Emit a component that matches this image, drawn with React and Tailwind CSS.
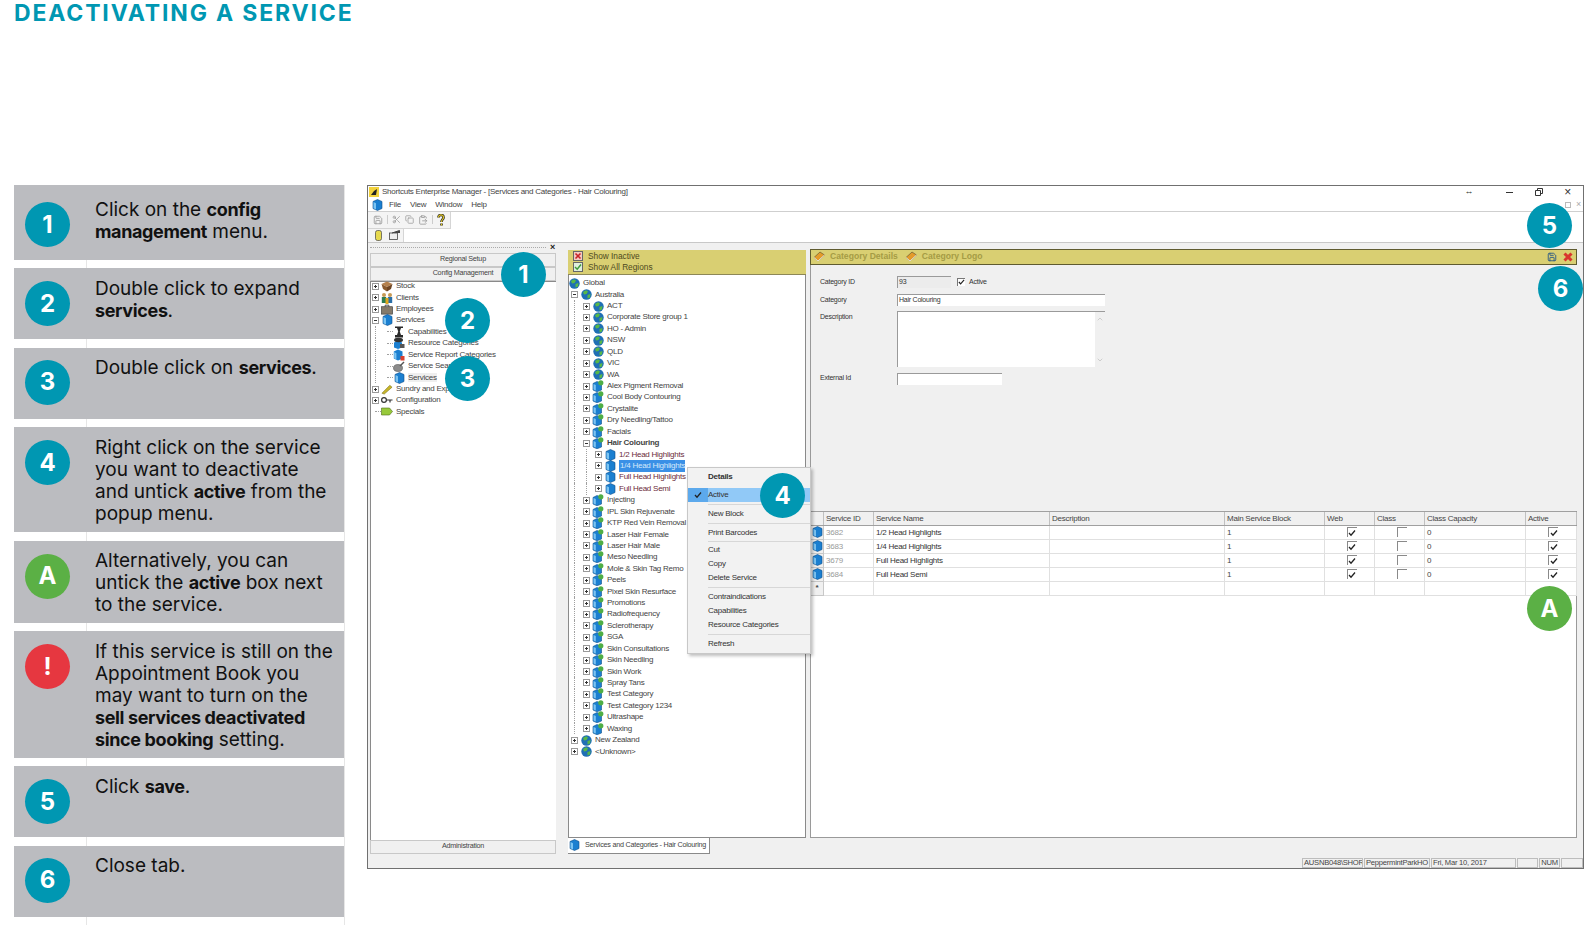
import { Save, Scissors, Copy, ClipboardPaste, ChevronUp, ChevronDown } from "lucide-react";

function B({ children }) {
  return <b className="text-[18px] tracking-[-0.02em]">{children}</b>;
}

const steps = [
  { badge: "1", color: "bg-[#0097b2]", h: "h-[75.5px]", pad: "pt-[17.5px]", textPad: "pt-[14px]", body: <>Click on the <B>config</B><br /><B>management</B> menu.</> },
  { badge: "2", color: "bg-[#0097b2]", h: "h-[71px]", pad: "pt-[13px]", textPad: "pt-[9.5px]", body: <>Double click to expand<br /><B>services</B>.</> },
  { badge: "3", color: "bg-[#0097b2]", h: "h-[71px]", pad: "pt-[12px]", textPad: "pt-[9.5px]", body: <>Double click on <B>services</B>.</> },
  { badge: "4", color: "bg-[#0097b2]", h: "h-[105px]", pad: "pt-[13px]", textPad: "pt-[9.5px]", body: <>Right click on the service<br />you want to deactivate<br />and untick <B>active</B> from the<br />popup menu.</> },
  { badge: "A", color: "bg-[#5bb045]", h: "h-[82.5px]", pad: "pt-[13px]", textPad: "pt-[9.5px]", body: <>Alternatively, you can<br />untick the <B>active</B> box next<br />to the service.</> },
  { badge: "!", color: "bg-[#e63740]", h: "h-[126.5px]", pad: "pt-[13px]", textPad: "pt-[9.5px]", body: <>If this service is still on the<br />Appointment Book you<br />may want to turn on the<br /><B>sell services deactivated</B><br /><B>since booking</B> setting.</> },
  { badge: "5", color: "bg-[#0097b2]", h: "h-[71px]", pad: "pt-[13px]", textPad: "pt-[9.5px]", body: <>Click <B>save</B>.</> },
  { badge: "6", color: "bg-[#0097b2]", h: "h-[71px]", pad: "pt-[12px]", textPad: "pt-[9.5px]", body: <>Close tab.</> },
];

const regions = ["ACT", "Corporate Store group 1", "HO - Admin", "NSW", "QLD", "VIC", "WA"];
const categoriesA = ["Alex Pigment Removal", "Cool Body Contouring", "Crystalite", "Dry Needling/Tattoo", "Facials"];
const categoriesB = ["Injecting", "IPL Skin Rejuvenate", "KTP Red Vein Removal", "Laser Hair Female", "Laser Hair Male", "Meso Needling", "Mole & Skin Tag Remo", "Peels", "Pixel Skin Resurface", "Promotions", "Radiofrequency", "Sclerotherapy", "SGA", "Skin Consultations", "Skin Needling", "Skin Work", "Spray Tans", "Test Category", "Test Category 1234", "Ultrashape", "Waxing"];

const services = [
  { id: "3682", name: "1/2 Head Highlights" },
  { id: "3683", name: "1/4 Head Highlights" },
  { id: "3679", name: "Full Head Highlights" },
  { id: "3684", name: "Full Head Semi" },
];

const gridCols = "grid grid-cols-[13px_50px_176px_175px_100px_50px_50px_101px_51px]";

function Globe() {
  return (
    <svg width="11" height="11" viewBox="0 0 11 11">
      <circle cx="5.5" cy="5.5" r="5.2" fill="#1f6fb5" />
      <path d="M2 3 L5 1.2 L7 2.5 L5.5 5 L3 5.5 Z M6.5 6 L9.5 5 L9 8.5 L6.5 9.5 Z" fill="#58b848" />
    </svg>
  );
}

function Cube() {
  return (
    <svg width="11" height="12" viewBox="0 0 11 12">
      <path d="M5.5 0.5 L10 2.5 V9.5 L5.5 11.5 L1 9.5 V2.5 Z" fill="#1b7fd0" stroke="#0e4f8a" strokeWidth="0.6" />
      <path d="M1.5 3 L4 4.2 V10.4 L1.5 9.2 Z" fill="#7cc4f2" />
    </svg>
  );
}

function GreenCube() {
  return (
    <svg width="12" height="12" viewBox="0 0 12 12">
      <path d="M5 1.5 L9.5 3.5 V10 L5 11.8 L1 10 V3.5 Z" fill="#1b7fd0" stroke="#0e4f8a" strokeWidth="0.6" />
      <path d="M1.5 4 L3.8 5 V10.6 L1.5 9.6 Z" fill="#7cc4f2" />
      <circle cx="8.8" cy="2.8" r="2.6" fill="#4fae45" />
    </svg>
  );
}

function LeftIcon({ kind }) {
  if (kind === "stock") return <svg width="12" height="11" viewBox="0 0 12 11"><path d="M6 0.5 L11.5 3 L6 6 L0.5 3 Z" fill="#b5814d" /><path d="M0.5 3 L6 6 V10.5 L2 8 Z" fill="#8a5a2d" /><path d="M11.5 3 L6 6 V10.5 L10 8 Z" fill="#6f4522" /></svg>;
  if (kind === "clients") return <svg width="12" height="12" viewBox="0 0 12 12"><circle cx="3" cy="3" r="2" fill="#c79a55" /><circle cx="9" cy="3" r="2" fill="#c79a55" /><rect x="0.8" y="5" width="4.4" height="6" fill="#2c7c52" /><rect x="6.8" y="5" width="4.4" height="6" fill="#2a6fa8" /><rect x="4.5" y="6" width="3" height="6" fill="#e0a81e" /></svg>;
  if (kind === "employees") return <svg width="13" height="11" viewBox="0 0 13 11"><path d="M4.5 2.5 V0.8 H8.5 V2.5" fill="none" stroke="#444" /><rect x="0.5" y="2.5" width="12" height="8" fill="#857a6a" stroke="#3a3a3a" strokeWidth="0.7" /></svg>;
  if (kind === "services") return <Cube />;
  if (kind === "capabilities") return <svg width="10" height="12" viewBox="0 0 10 12"><path d="M1 0.5 H9 V2 H7 L5.8 5.5 L7 9 H9 V11.5 H1 V9 H3 L4.2 5.5 L3 2 H1 Z" fill="#2a2a2a" /></svg>;
  if (kind === "resource") return <svg width="12" height="12" viewBox="0 0 12 12"><path d="M5 4 L9 5.5 V10.5 L5 12 L1 10.5 V5.5 Z" fill="#1b7fd0" /><ellipse cx="5.5" cy="3" rx="4.5" ry="2.2" fill="#333" /><rect x="7" y="7" width="4.5" height="4" fill="#555" /></svg>;
  if (kind === "report") return <svg width="12" height="12" viewBox="0 0 12 12"><path d="M5 0.5 L9.5 2.5 V9.5 L5 11.5 L0.8 9.5 V2.5 Z" fill="#1b7fd0" /><path d="M1.2 3 L3.4 4.2 V10.2 L1.2 9.2 Z" fill="#7cc4f2" /><rect x="7.5" y="7" width="4" height="4.5" fill="#d9412f" /></svg>;
  if (kind === "search") return <svg width="12" height="11" viewBox="0 0 12 11"><ellipse cx="5" cy="7" rx="4.5" ry="3.5" fill="#8b8b8b" stroke="#555" strokeWidth="0.6" /><path d="M7 5 L11 1" stroke="#555" strokeWidth="1.4" /></svg>;
  if (kind === "sundry") return <svg width="13" height="11" viewBox="0 0 13 11"><path d="M1 9.5 L9.5 1 L12 3 L3.5 10.5 Z" fill="#c7b62b" stroke="#7a6f14" strokeWidth="0.6" /></svg>;
  if (kind === "config") return <svg width="12" height="8" viewBox="0 0 12 8"><circle cx="3" cy="4" r="2.4" fill="none" stroke="#333" strokeWidth="1.2" /><path d="M5.4 4 H11.5 M9 4 V6.5" stroke="#333" strokeWidth="1.2" /></svg>;
  return <svg width="12" height="9" viewBox="0 0 12 9"><path d="M0.5 1 H8.5 L11.5 4.5 L8.5 8 H0.5 Z" fill="#97c93a" stroke="#4f6d17" strokeWidth="0.6" /></svg>;
}

function Expander({ open }) {
  return (
    <span className="relative flex h-[7px] w-[7px] items-center justify-center border border-[#9a9a9a] bg-white">
      <span className="h-px w-[3px] bg-[#333]" />
      {!open && <span className="absolute h-[3px] w-px bg-[#333]" />}
    </span>
  );
}

function TreeRow({ depth, guides = 0, expander = "plus", icon, children, className = "" }) {
  return (
    <div className="flex h-[11.43px] items-center">
      {Array.from({ length: guides }).map((_, i) => (
        <span key={i} className="ml-[6px] h-full w-[6px] border-l border-dotted border-[#a0a0a0]" />
      ))}
      {depth > 0 && (
        <span className="flex h-full w-[12px] items-center justify-center">
          {expander === "plus" && <Expander />}
          {expander === "minus" && <Expander open />}
          {expander === "line" && <span className="ml-[6px] h-px w-[6px] border-t border-dotted border-[#a0a0a0]" />}
        </span>
      )}
      <span className="flex w-[12px] items-center justify-center">{icon}</span>
      <span className={`ml-[3px] whitespace-nowrap ${className}`}>{children}</span>
    </div>
  );
}

function WinButton({ children, className = "" }) {
  return (
    <div className={`flex items-center justify-center border border-[#c8c8c8] bg-[#f0f0f0] text-[7.2px] text-[#444] ${className}`}>
      {children}
    </div>
  );
}

function Tick() {
  return (
    <svg width="8" height="8" viewBox="0 0 8 8">
      <path d="M1 4 L3 6.2 L7 1.5" fill="none" stroke="#222" strokeWidth="1.3" />
    </svg>
  );
}

function CheckCell({ checked }) {
  return (
    <div className="flex items-center justify-center border-r border-b border-[#e0e0e0] pl-[4px]">
      <span className="flex h-[10px] w-[10px] items-center justify-center border-t border-l border-[#8a8a8a] bg-white">
        {checked && <Tick />}
      </span>
    </div>
  );
}

function Cell({ children, className = "" }) {
  return <div className={`flex items-center overflow-hidden whitespace-nowrap border-r border-b border-[#e0e0e0] pl-[2px] pt-px ${className}`}>{children}</div>;
}

function BookIcon() {
  return (
    <svg width="12" height="11" viewBox="0 0 12 11">
      <path d="M1 6.5 L7 1 L11.5 4 L5 10 Z" fill="#e39b2b" stroke="#6b5a30" strokeWidth="0.7" />
      <path d="M1 6.5 L5 10 L11.5 4" fill="none" stroke="#fff" strokeWidth="0.8" />
    </svg>
  );
}

function MenuItem({ children, active, bold }) {
  return (
    <div className={`flex h-[14px] items-center ${active ? "bg-[#91c9f7]" : ""}`}>
      <span className={`flex h-full w-[20px] items-center justify-center ${active ? "bg-[#5ca9ec]" : ""}`}>
        {active && <Tick />}
      </span>
      <span className={bold ? "font-bold" : ""}>{children}</span>
    </div>
  );
}

function MenuSep({ tight }) {
  return <div className={`ml-[20px] h-px bg-[#d7d7d7] ${tight ? "my-px" : "my-[2px]"}`} />;
}

function Callout({ label, className, color = "bg-[#0097b2]" }) {
  return (
    <div className={`absolute flex h-[45px] w-[45px] items-center justify-center rounded-full text-[24px] font-bold text-white ${color} ${className}`}>
      {label}
    </div>
  );
}

export default function App() {
  return (
    <div className="relative h-[926px] w-[1596px] overflow-hidden bg-white font-['Inter',sans-serif]">
      <div className="h-[184.5px] pl-[14px] pt-px">
        <h1 className="text-[23px] font-bold uppercase leading-[25px] tracking-[0.08em] text-[#0097b2]">Deactivating a service</h1>
      </div>

      <div className="flex items-start pl-[14px]">
        {/* instruction steps */}
        <div className="w-[331px] border-r border-[#e6e6e6]">
          {steps.map((s) => (
            <div key={s.badge}>
              <div className={`flex bg-[#bbbcc0] ${s.h}`}>
                <div className={`ml-[11px] w-[45px] shrink-0 ${s.pad}`}>
                  <div className={`flex h-[45px] w-[45px] items-center justify-center rounded-full text-[24px] font-bold text-white ${s.color}`}>{s.badge}</div>
                </div>
                <div className={`ml-[25px] whitespace-nowrap text-[19px] leading-[22px] text-[#111] ${s.textPad}`}>{s.body}</div>
              </div>
              <div className="ml-[72px] h-[8.4px] border-l border-[#e6e6e6]" />
            </div>
          ))}
        </div>

        {/* application window */}
        <div className="ml-[22px] flex h-[684px] w-[1217px] flex-col border border-[#707070] bg-white font-['Liberation_Sans',sans-serif] text-[8px] tracking-[-0.03em] text-[#444]">
          <div className="flex h-[13px] items-center pl-[1px]">
            <svg width="10" height="10" viewBox="0 0 10 10" className="mr-[3px]"><rect width="10" height="10" fill="#f2d23c" /><path d="M2 8 L5 4 L8 2 L7 8 Z" fill="#222" /></svg>
            <span>Shortcuts Enterprise Manager - [Services and Categories - Hair Colouring]</span>
            <div className="ml-auto flex items-center pr-[12px] text-[#333]">
              <span className="mr-[33px] text-[9px]">↔</span>
              <span className="mr-[22px] h-px w-[7px] bg-[#333]" />
              <svg width="8" height="8" viewBox="0 0 8 8" className="mr-[21px]"><path d="M0.5 2.5 H5.5 V7.5 H0.5 Z M2.5 2.5 V0.5 H7.5 V5.5 H5.5" fill="none" stroke="#333" /></svg>
              <span className="text-[12px] leading-none">×</span>
            </div>
          </div>
          <div className="flex h-[13px] items-center border-b border-[#cfcfcf] pl-[4px]">
            <Cube />
            <span className="ml-[6px] mr-[9px]">File</span>
            <span className="mr-[9px]">View</span>
            <span className="mr-[9px]">Window</span>
            <span>Help</span>
            <div className="ml-auto flex items-center gap-[5px] pr-[2px] text-[#aaa]">
              <span className="h-[6px] w-[6px] border border-[#bbb]" />
              <span className="text-[9px] leading-none">×</span>
            </div>
          </div>
          <div className="flex h-[17px] items-center">
            <div className="flex h-full items-center gap-[4px] border-b border-r border-[#d5d5d5] bg-[#f4f4f4] pl-[5px] pr-[5px] text-[#9a9a9a]">
              <Save size={10} />
              <span className="h-[9px] w-px bg-[#ccc]" />
              <Scissors size={9} />
              <Copy size={9} />
              <ClipboardPaste size={10} />
              <span className="h-[9px] w-px bg-[#ccc]" />
              <svg width="8" height="12" viewBox="0 0 8 12"><path d="M1.5 3.5 C1.5 0 6.5 0 6.5 3.5 C6.5 5.5 4.5 5.5 4.5 8 M4.5 9.5 V11.5" fill="none" stroke="#222" strokeWidth="2.6" /><path d="M1.5 3.5 C1.5 0 6.5 0 6.5 3.5 C6.5 5.5 4.5 5.5 4.5 8 M4.5 9.5 V11.5" fill="none" stroke="#e0c62a" strokeWidth="1.2" /></svg>
            </div>
          </div>
          <div className="flex h-[14px] items-center border-b border-[#c8c8c8]">
            <div className="flex h-full items-center gap-[7px] border-r border-[#d5d5d5] bg-[#f4f4f4] pl-[7px] pr-[3px]">
              <svg width="7" height="11" viewBox="0 0 7 11"><rect x="0.5" y="0.5" width="6" height="10" rx="2" fill="#e6d94e" stroke="#444" strokeWidth="0.7" /></svg>
              <svg width="11" height="10" viewBox="0 0 11 10"><rect x="0.5" y="3" width="8" height="6.5" fill="#eee" stroke="#444" strokeWidth="0.8" /><path d="M3 3 L10.5 0.5 V3" fill="#444" stroke="#444" /></svg>
            </div>
          </div>

          <div className="flex min-h-0 flex-1 bg-[#f0f0f0]">
            {/* left navigation */}
            <div className="ml-[2px] flex w-[186px] shrink-0 flex-col">
              <div className="flex h-[10px] items-center justify-end pr-[1px] text-[9px] font-bold leading-none text-[#222]">
                <span className="mr-[4px] h-px flex-1 border-t border-dotted border-[#aaa]" />×
              </div>
              <WinButton className="h-[14px]">Regional Setup</WinButton>
              <WinButton className="h-[14px]">Config Management</WinButton>
              <div className="min-h-0 flex-1 border-l border-t border-[#8a8a8a] bg-white">
                <div className="-ml-[2px] -mt-px">
                  <TreeRow depth={1} icon={<LeftIcon kind="stock" />}>Stock</TreeRow>
                  <TreeRow depth={1} icon={<LeftIcon kind="clients" />}>Clients</TreeRow>
                  <TreeRow depth={1} icon={<LeftIcon kind="employees" />}>Employees</TreeRow>
                  <TreeRow depth={1} expander="minus" icon={<LeftIcon kind="services" />}>Services</TreeRow>
                  <TreeRow depth={2} guides={1} expander="line" icon={<LeftIcon kind="capabilities" />}>Capabilities</TreeRow>
                  <TreeRow depth={2} guides={1} expander="line" icon={<LeftIcon kind="resource" />}>Resource Categories</TreeRow>
                  <TreeRow depth={2} guides={1} expander="line" icon={<LeftIcon kind="report" />}>Service Report Categories</TreeRow>
                  <TreeRow depth={2} guides={1} expander="line" icon={<LeftIcon kind="search" />}>Service Search</TreeRow>
                  <TreeRow depth={2} guides={1} expander="line" icon={<LeftIcon kind="services" />}><span className="bg-[#efefef]">Services</span></TreeRow>
                  <TreeRow depth={1} icon={<LeftIcon kind="sundry" />}>Sundry and Expenses</TreeRow>
                  <TreeRow depth={1} icon={<LeftIcon kind="config" />}>Configuration</TreeRow>
                  <TreeRow depth={1} expander="line" icon={<LeftIcon kind="specials" />}>Specials</TreeRow>
                </div>
              </div>
              <WinButton className="h-[14px]">Administration</WinButton>
            </div>

            <div className="w-[12px] shrink-0" />

            {/* category tree */}
            <div className="flex w-[238px] shrink-0 flex-col pt-[7px]">
              <div className="flex h-[25px] flex-col justify-center border-b border-[#8d8756] bg-[#d9cf72] pl-[5px] text-[8.3px] tracking-normal text-[#4d4a20]">
                <div className="flex h-[10.5px] items-center gap-[5px]">
                  <svg width="10" height="10" viewBox="0 0 10 10"><rect x="0.5" y="0.5" width="9" height="9" fill="#f3c9c0" stroke="#666" /><path d="M2.5 2.5 L7.5 7.5 M7.5 2.5 L2.5 7.5" stroke="#c8242a" strokeWidth="1.6" /></svg>
                  Show Inactive
                </div>
                <div className="flex h-[10.5px] items-center gap-[5px]">
                  <svg width="10" height="10" viewBox="0 0 10 10"><rect x="0.5" y="0.5" width="9" height="9" fill="#dfeedd" stroke="#666" /><path d="M2 5 L4.2 7.2 L8 2.5" fill="none" stroke="#3c9a3c" strokeWidth="1.5" /></svg>
                  Show All Regions
                </div>
              </div>
              <div className="min-h-0 flex-1 border-b border-l border-r border-[#8a8a8a] bg-white pt-[3px]">
                <div className="-ml-px">
                  <TreeRow depth={0} icon={<Globe />}>Global</TreeRow>
                  <TreeRow depth={1} expander="minus" icon={<Globe />}>Australia</TreeRow>
                  {regions.map((r) => <TreeRow key={r} depth={2} guides={1} icon={<Globe />}>{r}</TreeRow>)}
                  {categoriesA.map((c) => <TreeRow key={c} depth={2} guides={1} icon={<GreenCube />}>{c}</TreeRow>)}
                  <TreeRow depth={2} guides={1} expander="minus" icon={<GreenCube />} className="font-bold">Hair Colouring</TreeRow>
                  <TreeRow depth={3} guides={2} icon={<Cube />} className="text-[#6b2b3a]">1/2 Head Highlights</TreeRow>
                  <TreeRow depth={3} guides={2} icon={<Cube />} className="-ml-px bg-[#3a90e6] pl-[1px] text-[#d5e8fa]">1/4 Head Highlights</TreeRow>
                  <TreeRow depth={3} guides={2} icon={<Cube />} className="text-[#6b2b3a]">Full Head Highlights</TreeRow>
                  <TreeRow depth={3} guides={2} icon={<Cube />} className="text-[#6b2b3a]">Full Head Semi</TreeRow>
                  {categoriesB.map((c) => <TreeRow key={c} depth={2} guides={1} icon={<GreenCube />}>{c}</TreeRow>)}
                  <TreeRow depth={1} icon={<Globe />}>New Zealand</TreeRow>
                  <TreeRow depth={1} icon={<Globe />}>{"<Unknown>"}</TreeRow>
                </div>
              </div>
              <div className="flex h-[16px]">
                <div className="flex h-[16px] w-[142px] items-center whitespace-nowrap border-b border-r border-[#8a8a8a] bg-white pl-px text-[7.2px]">
                  <Cube />
                  <span className="ml-[5px]">Services and Categories - Hair Colouring</span>
                </div>
              </div>
            </div>

            <div className="w-[4px] shrink-0" />

            {/* details panel */}
            <div className="flex w-[767px] shrink-0 flex-col pb-[16px] pt-[6px]">
              <div className="flex h-[16px] shrink-0 items-center whitespace-nowrap border border-[#5f5b30] bg-[#d9cf72] pl-[2px] pr-[3px] text-[8.6px] font-bold tracking-normal text-[#a59c45]">
                <BookIcon />
                <span className="ml-[5px]">Category Details</span>
                <span className="ml-[7px]"><BookIcon /></span>
                <span className="ml-[5px]">Category Logo</span>
                <span className="ml-auto mr-[6px]"><Save size={10} className="text-[#1c4f86]" /></span>
                <svg width="10" height="10" viewBox="0 0 10 10"><path d="M1.5 1.5 L8.5 8.5 M8.5 1.5 L1.5 8.5" stroke="#d9352e" strokeWidth="3" /></svg>
              </div>

              <div className="h-[246px] shrink-0 border-l border-[#9a9a9a] pl-[9px] pt-[11px] text-[7px] text-[#333]">
                <div className="flex h-[12px] items-center">
                  <span className="w-[77px] pt-px">Category ID</span>
                  <span className="flex h-[12px] w-[54px] items-center border-t border-l border-[#9a9a9a] bg-[#ececec] pl-[1px]">93</span>
                  <span className="ml-[6px] flex h-[8px] w-[8px] items-center justify-center border-t border-l border-[#777] bg-white"><Tick /></span>
                  <span className="ml-[4px] pt-px">Active</span>
                </div>
                <div className="mt-[6px] flex h-[12px] items-center">
                  <span className="w-[77px] pt-[2px]">Category</span>
                  <span className="flex h-[12px] w-[208px] items-center border-t border-l border-[#9a9a9a] bg-white pl-[1px] pt-px">Hair Colouring</span>
                </div>
                <div className="mt-[5px] flex h-[56px] items-start">
                  <span className="mt-px w-[77px]">Description</span>
                  <span className="flex h-[56px] w-[208px] justify-end border-t border-l border-[#9a9a9a] bg-white">
                    <span className="flex w-[10px] flex-col items-center justify-between bg-[#f0f0f0] py-[3px] text-[#bbb]"><ChevronUp size={8} /><ChevronDown size={8} /></span>
                  </span>
                </div>
                <div className="mt-[6px] flex h-[12px] items-center">
                  <span className="w-[77px]">External Id</span>
                  <span className="h-[12px] w-[105px] border-t border-l border-[#9a9a9a] bg-white" />
                </div>
              </div>

              <div className="min-h-0 flex-1 border-l border-r border-b border-[#9a9a9a] bg-white">
                <div className={`${gridCols} h-[15px] border-t border-[#a0a0a0] border-b bg-[#f0f0f0] text-[#444]`}>
                  {["", "Service ID", "Service Name", "Description", "Main Service Block", "Web", "Class", "Class Capacity", "Active"].map((h) => (
                    <div key={h} className="flex items-center border-r border-[#c0c0c0] pl-[2px] pt-px">{h}</div>
                  ))}
                </div>
                {services.map((s) => (
                  <div key={s.id} className={`${gridCols} h-[14px]`}>
                    <div className="flex items-center justify-center border-r border-b border-[#c8c8c8] bg-[#f0f0f0]"><Cube /></div>
                    <Cell className="text-[#9a9a9a]">{s.id}</Cell>
                    <Cell className="text-[#333]">{s.name}</Cell>
                    <Cell />
                    <Cell>1</Cell>
                    <CheckCell checked />
                    <CheckCell />
                    <Cell>0</Cell>
                    <CheckCell checked />
                  </div>
                ))}
                <div className={`${gridCols} h-[14px]`}>
                  <div className="flex items-center justify-center border-r border-b border-[#c8c8c8] bg-[#f0f0f0] font-bold">*</div>
                  <Cell /><Cell /><Cell /><Cell /><Cell /><Cell /><Cell /><Cell />
                </div>
              </div>
            </div>
          </div>

          {/* status bar */}
          <div className="flex h-[14px] shrink-0 items-end justify-end bg-[#f0f0f0] text-[7.6px] text-[#444]">
            <div className="flex h-[10px] w-[61px] items-center overflow-hidden whitespace-nowrap border border-[#bdbdbd] pl-px">AUSNB048\SHOR</div>
            <div className="ml-[1px] flex h-[10px] w-[66px] items-center overflow-hidden whitespace-nowrap border border-[#bdbdbd] pl-[1px]">PeppermintParkHO</div>
            <div className="ml-[1px] flex h-[10px] w-[85px] items-center border border-[#bdbdbd] pl-[1px]">Fri, Mar 10, 2017</div>
            <div className="ml-[1px] h-[10px] w-[21px] border border-[#bdbdbd]" />
            <div className="ml-[1px] flex h-[10px] w-[21px] items-center justify-center border border-[#bdbdbd]">NUM</div>
            <div className="ml-[1px] h-[10px] w-[22px] border border-[#bdbdbd]" />
          </div>
        </div>
      </div>

      {/* context menu over the tree */}
      <div className="absolute left-[687px] top-[467px] w-[124px] border border-[#c8c8c8] bg-[#f2f2f2] py-[2px] font-['Liberation_Sans',sans-serif] text-[8px] tracking-[-0.03em] text-[#333] shadow-[2px_2px_3px_rgba(0,0,0,0.25)]">
        <MenuItem bold>Details</MenuItem>
        <div className="h-[4px]" />
        <MenuItem active>Active</MenuItem>
        <MenuSep />
        <MenuItem>New Block</MenuItem>
        <MenuSep />
        <MenuItem>Print Barcodes</MenuItem>
        <MenuSep tight />
        <MenuItem>Cut</MenuItem>
        <MenuItem>Copy</MenuItem>
        <MenuItem>Delete Service</MenuItem>
        <MenuSep />
        <MenuItem>Contraindications</MenuItem>
        <MenuItem>Capabilities</MenuItem>
        <MenuItem>Resource Categories</MenuItem>
        <MenuSep />
        <MenuItem>Refresh</MenuItem>
      </div>

      {/* numbered callouts over the screenshot */}
      <Callout label="1" className="left-[501px] top-[252px]" />
      <Callout label="2" className="left-[445px] top-[298px]" />
      <Callout label="3" className="left-[445px] top-[356px]" />
      <Callout label="4" className="left-[760px] top-[473px]" />
      <Callout label="5" className="left-[1527px] top-[203px]" />
      <Callout label="6" className="left-[1538px] top-[266px]" />
      <Callout label="A" className="left-[1527px] top-[586px]" color="bg-[#5bb045]" />
    </div>
  );
}
